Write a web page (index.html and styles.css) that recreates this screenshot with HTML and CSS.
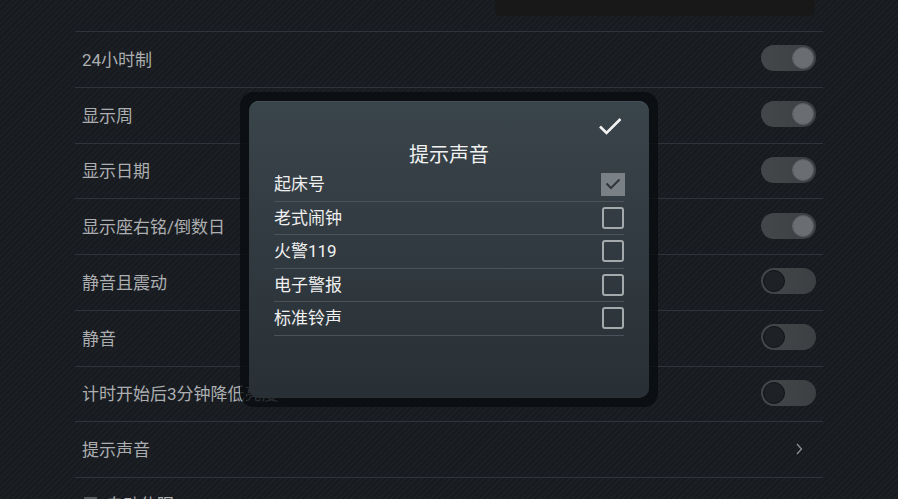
FILE: index.html
```html
<!DOCTYPE html>
<html lang="zh-CN">
<head>
    <meta charset="UTF-8">
    <meta name="viewport" content="width=device-width, initial-scale=1.0">
    <title>设置</title>
    <link rel="stylesheet" href="styles.css">
</head>
<body>
    <div class="settings">
        <div class="top-row">
            <div class="select-box"></div>
        </div>

        <div class="row">
            <span class="label">24小时制</span>
            <span class="toggle on"><span class="knob"></span></span>
        </div>
        <div class="row">
            <span class="label">显示周</span>
            <span class="toggle on"><span class="knob"></span></span>
        </div>
        <div class="row">
            <span class="label">显示日期</span>
            <span class="toggle on"><span class="knob"></span></span>
        </div>
        <div class="row">
            <span class="label">显示座右铭/倒数日</span>
            <span class="toggle on"><span class="knob"></span></span>
        </div>
        <div class="row">
            <span class="label">静音且震动</span>
            <span class="toggle"><span class="knob"></span></span>
        </div>
        <div class="row">
            <span class="label">静音</span>
            <span class="toggle"><span class="knob"></span></span>
        </div>
        <div class="row">
            <span class="label">计时开始后3分钟降低亮度</span>
            <span class="toggle"><span class="knob"></span></span>
        </div>
        <div class="row">
            <span class="label">提示声音</span>
            <svg class="chevron" width="8" height="12" viewBox="0 0 8 12">
                <path d="M2 1 L6.5 6 L2 11" fill="none" stroke="#8e9092" stroke-width="1.3"/>
            </svg>
        </div>
        <div class="row last-row">
            <span class="label"><span class="mini-icon"></span>自动休眠</span>
        </div>
    </div>

    <!-- sound picker dialog -->
    <div class="dialog-frame">
        <div class="dialog">
            <div class="dialog-top">
                <svg class="ok-icon" width="24" height="18" viewBox="0 0 24 18">
                    <path d="M2 9.5 L8.5 16 L22.5 2" fill="none" stroke="#f2f2f2" stroke-width="2.6"/>
                </svg>
            </div>
            <div class="dialog-title">提示声音</div>
            <ul class="sound-list">
                <li class="sound-item">
                    <span>起床号</span>
                    <span class="checkbox checked">
                        <svg width="16" height="12" viewBox="0 0 16 12">
                            <path d="M1.5 5.5 L6 10 L14.5 1.5" fill="none" stroke="#30363a" stroke-width="2"/>
                        </svg>
                    </span>
                </li>
                <li class="sound-item"><span>老式闹钟</span><span class="checkbox"></span></li>
                <li class="sound-item"><span>火警119</span><span class="checkbox"></span></li>
                <li class="sound-item"><span>电子警报</span><span class="checkbox"></span></li>
                <li class="sound-item"><span>标准铃声</span><span class="checkbox"></span></li>
            </ul>
        </div>
    </div>
</body>
</html>
```

FILE: styles.css
```css
* { margin: 0; padding: 0; box-sizing: border-box; }
html, body { height: 499px; overflow: hidden; }
body {
    font-family: Roboto, "Noto Sans CJK SC", sans-serif;
    background-color: #171b20;
    background-image: repeating-linear-gradient(135deg, rgba(255,255,255,0.018) 0px, rgba(255,255,255,0.018) 2px, transparent 2px, transparent 4px);
    position: relative;
}

.settings { width: 748px; margin-left: 75px; }
.top-row { height: 31px; display: flex; justify-content: flex-end; }
.select-box {
    width: 320px; height: 16px; margin-right: 8px;
    background: #181818; border-radius: 0 0 5px 5px;
}

.row {
    height: 55.75px; border-top: 1px solid #30343a;
    display: flex; align-items: center; justify-content: space-between;
    padding: 0 7px 2px 7px;
}
.last-row { align-items: flex-start; padding-top: 13px; }
.label { font-size: 17px; color: #acaeb0; display: flex; align-items: center; }
.mini-icon { width: 13px; height: 9px; background: #55595d; margin: 0 9px 0 2px; align-self: flex-start; margin-top: 6px; }

.toggle {
    width: 55px; height: 26px; border-radius: 13px;
    background: linear-gradient(90deg, #444749 0%, #3d4043 100%);
    display: flex; align-items: center; padding: 0 2px;
}
.toggle .knob {
    width: 22px; height: 22px; border-radius: 50%;
    background: #1e2226; border: 1px solid #111417;
}
.toggle.on { justify-content: flex-end; }
.toggle.on .knob { background: #6a6e72; border-color: #5a5e62; }
.chevron { margin-right: 13px; }

.dialog-frame {
    position: absolute; left: 240px; top: 92px;
    width: 418px; height: 315px; padding: 9px;
    background: rgba(8, 11, 14, 0.78); border-radius: 14px;
}
.dialog {
    height: 100%; border-radius: 10px; padding: 0 25px;
    background: linear-gradient(180deg, #3a444b 0%, #313a40 50%, #283036 100%);
    box-shadow: inset 0 1px 0 #46505a;
}
.dialog-top { height: 42px; display: flex; justify-content: flex-end; align-items: flex-start; }
.ok-icon { margin-top: 16px; margin-right: 2px; }
.dialog-title {
    height: 25px; line-height: 24px; text-align: center;
    font-size: 20px; color: #f2f2f2;
}
.sound-list { list-style: none; }
.sound-item {
    height: 33.5px; border-bottom: 1px solid #4a535a;
    display: flex; align-items: center; justify-content: space-between;
    font-size: 17px; color: #f0f0f0;
}
.sound-item > span:first-child { margin-top: -3px; }
.checkbox {
    width: 22px; height: 22px; border: 2px solid #a4a9ac; border-radius: 3px;
    display: flex; align-items: center; justify-content: center;
}
.checkbox.checked {
    width: 24px; height: 23px; border: none; border-radius: 0;
    background: #7a8186; margin-right: -1px;
}
```
